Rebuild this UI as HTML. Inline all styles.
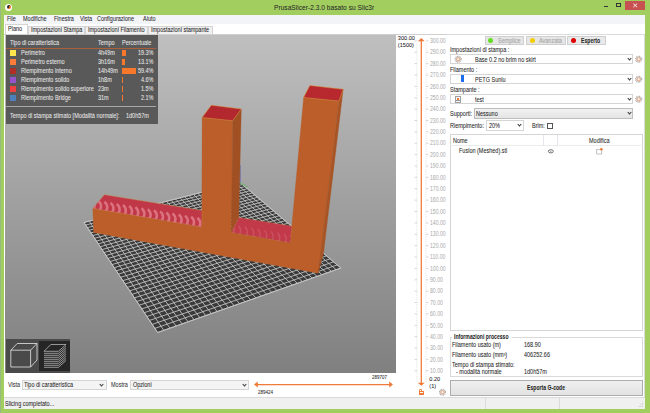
<!DOCTYPE html>
<html><head><meta charset="utf-8">
<style>
*{box-sizing:border-box}
html,body{margin:0;padding:0;width:650px;height:413px;overflow:hidden;background:#A2CE60;font-family:"Liberation Sans",sans-serif;color:#1e1e1e}
.a{position:absolute;white-space:nowrap}
.t{position:absolute;white-space:nowrap;font-size:6.4px;line-height:1;-webkit-text-stroke:0.05px currentColor;transform:scaleX(0.86);transform-origin:0 0}
.t[style*=bold]{transform:scaleX(0.8)}
.r{transform-origin:100% 0}
#title{left:274px;top:3.7px;font-size:7.2px;line-height:1;color:#222;transform:scaleX(0.925);transform-origin:0 0}
#menubar{left:4px;top:15px;width:641px;height:8.7px;background:#F3F4F7}
#tabstrip{left:4px;top:23.7px;width:641px;height:10.8px;background:#fff}
.tab{position:absolute;top:25.7px;height:8.8px;background:#F0F0F0;border:0.5px solid #d4d4d4;border-bottom:none}
#canvas{left:5px;top:34.5px;width:390.7px;height:338px;background:linear-gradient(#BFBFBF,#808080);overflow:hidden}
#main{left:4px;top:34px;width:641px;height:375px;background:#fff}
#ovl{left:6px;top:35px;width:151.6px;height:88.6px;background:#595959}
.ot{color:#e8e8e8}
.sw{position:absolute;width:6px;height:6px;left:10px}
.bar{position:absolute;left:121.5px;height:5.5px;background:#F7772B}
.vl{position:absolute;left:429.5px;font-size:6.6px;color:#a8a8a8;line-height:6.4px;white-space:nowrap;transform:scaleX(0.78);transform-origin:0 0}
.btn{position:absolute;top:35.6px;height:9.6px;background:#E6E6E6;border:0.6px solid #CFCFCF;border-radius:0.6px}
.dot{position:absolute;width:5.2px;height:5.2px;border-radius:50%;top:1.2px}
.combo{position:absolute;background:#fff;border:0.6px solid #D5D5D5}
.arrow{position:absolute;width:3px;height:3px;border-right:0.7px solid #333;border-bottom:0.7px solid #333;transform:rotate(45deg)}
.gear{position:absolute;width:6.4px;height:6.4px;border-radius:50%;border:1.1px dotted #a8a8a8;background:radial-gradient(circle,#fff 0 1px,#f2c4a4 1.1px 2.2px,#c0c0c0 2.3px 2.6px,transparent 2.7px)}
</style></head><body>
<!-- title bar -->
<div class="a" style="left:5.3px;top:3.65px;width:7px;height:7px;border-radius:50%;background:#fff"></div>
<div class="a" style="left:6.6px;top:4.9px;width:4.5px;height:4.6px;border-radius:50%;background:linear-gradient(125deg,#2a2a2a 0 48%,#EE6A1E 52%)"></div>
<div class="a" style="left:0;top:0;width:0.8px;height:413px;background:#98B884"></div>
<div class="a" id="title">PrusaSlicer-2.3.0 basato su Slic3r</div>
<div class="a" style="left:603.8px;top:6.2px;width:4.4px;height:1px;background:#333"></div>
<div class="a" style="left:616px;top:3.3px;width:5.2px;height:4px;border:0.5px solid #333;border-top-width:1.1px"></div>
<div class="a" style="left:625px;top:1px;width:20.4px;height:8.6px;background:#C75050"></div>
<svg class="a" style="left:0;top:0" width="650" height="20"><path d="M633.3 3.6L637.1 7.2M637.1 3.6L633.3 7.2" stroke="#fff" stroke-width="0.9"/></svg>

<!-- main white area -->
<div class="a" id="main"></div>
<div class="a" id="menubar"></div>
<div class="a" id="tabstrip"></div>
<div class="t" style="left:7.4px;top:16.0px">File</div>
<div class="t" style="left:22.8px;top:16.0px">Modifiche</div>
<div class="t" style="left:54px;top:16.0px">Finestra</div>
<div class="t" style="left:80px;top:16.0px">Vista</div>
<div class="t" style="left:97.3px;top:16.0px">Configurazione</div>
<div class="t" style="left:142.5px;top:16.0px">Aiuto</div>

<div class="tab" style="left:28.2px;width:56.4px"></div>
<div class="tab" style="left:84.6px;width:63.3px"></div>
<div class="tab" style="left:147.9px;width:64.8px"></div>
<div class="a" style="left:4.6px;top:23.7px;width:23.6px;height:11px;background:#fff;border:0.5px solid #d4d4d4;border-bottom:none"></div>
<div class="t" style="left:7.8px;top:25.9px">Piano</div>
<div class="t" style="left:30.5px;top:27.1px">Impostazioni Stampa</div>
<div class="t" style="left:87.6px;top:27.1px">Impostazioni Filamento</div>
<div class="t" style="left:151.1px;top:27.1px">Impostazioni stampante</div>
<div class="a" style="left:4px;top:34px;width:641px;height:0.6px;background:#d0d0d0"></div>

<!-- canvas -->
<div class="a" id="canvas"></div>
<svg class="a" style="left:0;top:0" width="650" height="413" viewBox="0 0 650 413">
  <defs>
    <clipPath id="btl"><polygon points="104.4,194.7 202.0,210.6 201.8,227.0 92.8,208.3"/></clipPath>
    <clipPath id="btm"><polygon points="238.8,217.4 291.8,226.1 290.3,242.8 231.5,232.5"/></clipPath>
    <clipPath id="cv"><rect x="5" y="34.5" width="390.7" height="338"/></clipPath>
    <radialGradient id="arcs" gradientUnits="userSpaceOnUse" cx="40" cy="250" r="9" spreadMethod="repeat">
      <stop offset="0" stop-color="#B92E3C"/>
      <stop offset="0.45" stop-color="#B92E3C"/>
      <stop offset="0.65" stop-color="#E07C8A"/>
      <stop offset="0.85" stop-color="#B92E3C"/>
      <stop offset="1" stop-color="#B92E3C"/>
    </radialGradient>
  </defs>
  <g clip-path="url(#cv)">
    <polygon points="84,222.5 240,182.5 340.8,268 157.6,332.5" fill="#3a3a3a" stroke="#d0d0d0" stroke-width="0.7"/>
    <path d="M84.00 222.50L157.60 332.50M84.00 222.50L240.00 182.50M89.14 221.18L163.81 330.31M85.71 225.05L242.41 184.54M94.23 219.88L169.96 328.15M87.44 227.64L244.84 186.61M99.30 218.58L176.05 326.00M89.19 230.25L247.31 188.70M104.32 217.29L182.09 323.88M90.96 232.91L249.80 190.81M109.31 216.01L188.08 321.77M92.76 235.59L252.32 192.95M114.27 214.74L194.01 319.68M94.58 238.32L254.87 195.11M119.19 213.48L199.88 317.61M96.43 241.07L257.45 197.30M124.07 212.23L205.71 315.56M98.30 243.87L260.06 199.51M128.92 210.98L211.48 313.53M100.19 246.70L262.70 201.76M133.74 209.75L217.20 311.51M102.12 249.58L265.37 204.02M138.52 208.52L222.88 309.52M104.06 252.49L268.08 206.32M143.27 207.30L228.50 307.54M106.04 255.44L270.82 208.64M147.99 206.09L234.07 305.58M108.04 258.43L273.59 210.99M152.67 204.89L239.59 303.63M110.07 261.47L276.40 213.37M157.32 203.70L245.07 301.70M112.13 264.54L279.24 215.78M161.94 202.51L250.50 299.79M114.22 267.66L282.12 218.22M166.53 201.34L255.88 297.90M116.34 270.83L285.03 220.69M171.09 200.17L261.22 296.02M118.48 274.04L287.98 223.20M175.61 199.01L266.51 294.16M120.66 277.30L290.97 225.73M180.11 197.86L271.76 292.31M122.88 280.60L293.99 228.30M184.58 196.71L276.96 290.48M125.12 283.95L297.06 230.90M189.01 195.57L282.12 288.66M127.40 287.36L300.16 233.53M193.42 194.44L287.23 286.86M129.71 290.81L303.30 236.19M197.79 193.32L292.31 285.07M132.05 294.32L306.49 238.90M202.14 192.21L297.34 283.30M134.43 297.87L309.72 241.63M206.46 191.10L302.33 281.55M136.85 301.49L312.99 244.41M210.75 190.00L307.27 279.80M139.30 305.16L316.30 247.22M215.01 188.91L312.18 278.08M141.80 308.88L319.66 250.07M219.24 187.82L317.05 276.36M144.33 312.66L323.06 252.96M223.45 186.74L321.88 274.66M146.90 316.51L326.51 255.88M227.63 185.67L326.66 272.98M149.51 320.41L330.01 258.85M231.78 184.61L331.41 271.30M152.16 324.38L333.56 261.86M235.90 183.55L336.13 269.65M154.86 328.40L337.15 264.91M240.00 182.50L340.80 268.00M157.60 332.50L340.80 268.00" stroke="#c8c8c8" stroke-width="0.85" fill="none"/>
    <line x1="240" y1="165" x2="240" y2="183" stroke="#4040c0" stroke-width="0.7"/>
    <line x1="240" y1="183" x2="247.5" y2="187" stroke="#40b040" stroke-width="0.7"/>
    <polygon points="92.8,208.3 201.8,227.0 202.1,117.5 232.6,120.7 231.5,232.5 290.3,242.8 303.6,97.5 338.9,101.1 318.3,273.2 93.7,232.5" fill="#BB5E2A" stroke="#BB5E2A" stroke-width="0.3"/>
    <polygon points="232.6,120.7 241.3,109.0 238.8,217.4 231.5,232.5" fill="#A05023" stroke="#A05023" stroke-width="0.3"/>
    <polygon points="338.9,101.1 343.2,89.3 323.5,253.5 318.3,273.2" fill="#A85424" stroke="#A85424" stroke-width="0.3"/>
    <polygon points="104.4,194.7 202.0,210.6 201.8,227.0 92.8,208.3" fill="#C03848" stroke="#D08A40" stroke-width="0.4"/>
    <g clip-path="url(#btl)"><path d="M92.00 199.66C95.80 202.81 95.80 207.51 92.00 210.66M98.20 200.73C102.00 203.88 102.00 208.58 98.20 211.73M104.40 201.79C108.20 204.94 108.20 209.64 104.40 212.79M110.60 202.85C114.40 206.00 114.40 210.70 110.60 213.85M116.80 203.92C120.60 207.07 120.60 211.77 116.80 214.92M123.00 204.98C126.80 208.13 126.80 212.83 123.00 215.98M129.20 206.04C133.00 209.19 133.00 213.89 129.20 217.04M135.40 207.11C139.20 210.26 139.20 214.96 135.40 218.11M141.60 208.17C145.40 211.32 145.40 216.02 141.60 219.17M147.80 209.24C151.60 212.39 151.60 217.09 147.80 220.24M154.00 210.30C157.80 213.45 157.80 218.15 154.00 221.30M160.20 211.36C164.00 214.51 164.00 219.21 160.20 222.36M166.40 212.43C170.20 215.58 170.20 220.28 166.40 223.43M172.60 213.49C176.40 216.64 176.40 221.34 172.60 224.49M178.80 214.55C182.60 217.70 182.60 222.40 178.80 225.55M185.00 215.62C188.80 218.77 188.80 223.47 185.00 226.62M191.20 216.68C195.00 219.83 195.00 224.53 191.20 227.68M197.40 217.75C201.20 220.90 201.20 225.60 197.40 228.75" fill="none" stroke="#E07C8A" stroke-width="2.5" opacity="0.85"/></g>
    <polygon points="238.8,217.4 291.8,226.1 290.3,242.8 231.5,232.5" fill="#C23A4A" stroke="#D08A40" stroke-width="0.3"/>
    <g clip-path="url(#btm)"><path d="M232.00 224.59C235.00 227.59 235.00 232.09 232.00 235.09M238.50 225.73C241.50 228.73 241.50 233.23 238.50 236.23M245.00 226.86C248.00 229.86 248.00 234.36 245.00 237.36M251.50 228.00C254.50 231.00 254.50 235.50 251.50 238.50M258.00 229.14C261.00 232.14 261.00 236.64 258.00 239.64M264.50 230.28C267.50 233.28 267.50 237.78 264.50 240.78M271.00 231.42C274.00 234.42 274.00 238.92 271.00 241.92M277.50 232.56C280.50 235.56 280.50 240.06 277.50 243.06M284.00 233.70C287.00 236.70 287.00 241.20 284.00 244.20M290.50 234.84C293.50 237.84 293.50 242.34 290.50 245.34" fill="none" stroke="#D87080" stroke-width="1.6" opacity="0.4"/></g>
    <polygon points="211.3,105.2 241.3,109.0 232.6,120.7 202.1,117.5" fill="#B3282E" stroke="#D89030" stroke-width="0.5"/>
    <polygon points="309.8,85.5 343.2,89.3 338.9,101.1 303.6,97.5" fill="#B8292F" stroke="#D89030" stroke-width="0.5"/>
  </g>
</svg>

<!-- legend overlay -->
<div class="a" id="ovl"></div>
<div class="t ot" style="left:10px;top:39.6px">Tipo di caratteristica</div>
<div class="t ot" style="left:97.7px;top:39.6px">Tempo</div>
<div class="t ot" style="left:121.5px;top:39.6px">Percentuale</div>
<div class="a" style="left:6px;top:47.8px;width:149.5px;height:0.9px;background:#A8613A"></div>
<div class="sw" style="top:50px;background:#FFE64D"></div>
<div class="sw" style="top:59px;background:#FF7D38"></div>
<div class="sw" style="top:68px;background:#B03029"></div>
<div class="sw" style="top:77px;background:#9654CC"></div>
<div class="sw" style="top:86px;background:#F04040"></div>
<div class="sw" style="top:95px;background:#4D80BA"></div>
<div class="t ot" style="left:20.8px;top:50.4px">Perimetro</div>
<div class="t ot" style="left:20.8px;top:59.4px">Perimetro esterno</div>
<div class="t ot" style="left:20.8px;top:68.4px">Riempimento interno</div>
<div class="t ot" style="left:20.8px;top:77.4px">Riempimento solido</div>
<div class="t ot" style="left:20.8px;top:86.4px">Riempimento solido superiore</div>
<div class="t ot" style="left:20.8px;top:95.4px">Riempimento Bridge</div>
<div class="t ot" style="left:97.7px;top:50.4px">4h49m</div>
<div class="t ot" style="left:97.7px;top:59.4px">3h16m</div>
<div class="t ot" style="left:97.7px;top:68.4px">14h49m</div>
<div class="t ot" style="left:97.7px;top:77.4px">1h8m</div>
<div class="t ot" style="left:97.7px;top:86.4px">23m</div>
<div class="t ot" style="left:97.7px;top:95.4px">31m</div>
<div class="bar" style="top:50.3px;width:4.6px"></div>
<div class="bar" style="top:59.3px;width:3.4px"></div>
<div class="bar" style="top:68.3px;width:14.3px"></div>
<div class="bar" style="top:77.3px;width:1px"></div>
<div class="bar" style="top:86.3px;width:0.6px"></div>
<div class="bar" style="top:95.3px;width:0.6px"></div>
<div class="t ot r" style="left:130px;width:23.5px;text-align:right;top:50.4px">19.3%</div>
<div class="t ot r" style="left:130px;width:23.5px;text-align:right;top:59.4px">13.1%</div>
<div class="t ot r" style="left:130px;width:23.5px;text-align:right;top:68.4px">59.4%</div>
<div class="t ot r" style="left:130px;width:23.5px;text-align:right;top:77.4px">4.6%</div>
<div class="t ot r" style="left:130px;width:23.5px;text-align:right;top:86.4px">1.5%</div>
<div class="t ot r" style="left:130px;width:23.5px;text-align:right;top:95.4px">2.1%</div>
<div class="a" style="left:6px;top:106.1px;width:149.8px;height:0.8px;background:#a8a8a8"></div>
<div class="t ot" style="left:10px;top:112.6px">Tempo di stampa stimato [Modalità normale]:</div>
<div class="t ot" style="left:126px;top:112.6px">1d0h57m</div>

<!-- view toolbar -->
<div class="a" style="left:6px;top:338.8px;width:64.3px;height:34px;background:#4a4a4a"></div>
<div class="a" style="left:39px;top:341px;width:30.5px;height:29.7px;background:#262626"></div>
<svg class="a" style="left:0;top:0" width="650" height="413" viewBox="0 0 650 413">
  <g fill="none" stroke="#e6e6e6" stroke-width="0.8">
    <path d="M10.8 350.2 L17.2 343.5 L37 343.5 L37 360 L30.6 367 L10.8 367 Z M10.8 350.2 L30.6 350.2 L37 343.5 M30.6 350.2 L30.6 367"/>
  </g>
  <g fill="none" stroke="#e0e0e0" stroke-width="0.6">
    <path d="M44 351.3 L50.8 344.5 L66 344.5 L58.4 351.3 Z"/>
    <path d="M44 353.3H58.4L66 346.5 M44 355.3H58.4L66 348.5 M44 357.3H58.4L66 350.5 M44 359.3H58.4L66 352.5 M44 361.3H58.4L66 354.5 M44 363.3H58.4L66 356.5 M44 365.3H58.4L66 358.5 M44 367.3H58.4L66 360.5"/>
  </g>
</svg>

<!-- bottom toolbar -->
<div class="t" style="left:8px;top:382px;color:#333">Vista</div>
<div class="combo" style="left:22px;top:379.5px;width:84.6px;height:10.8px;background:#F4F4F4"></div>
<div class="t" style="left:24.2px;top:382px">Tipo di caratteristica</div>
<div class="arrow" style="left:100.2px;top:382.6px"></div>
<div class="t" style="left:111px;top:382px;color:#333">Mostra</div>
<div class="combo" style="left:130.3px;top:379.5px;width:118.7px;height:10.8px;background:#F4F4F4"></div>
<div class="t" style="left:132.5px;top:382px">Opzioni</div>
<div class="arrow" style="left:242.6px;top:382.6px"></div>
<svg class="a" style="left:0;top:0" width="650" height="413" viewBox="0 0 650 413">
  <line x1="256" y1="384.6" x2="391" y2="384.6" stroke="#F07A3A" stroke-width="1.1"/>
  <path d="M254 384.6 L257.8 381.6 L257.8 387.6 Z M393 384.6 L389.2 381.6 L389.2 387.6 Z" fill="#F07A3A"/>
  <!-- vertical slider -->
  <line x1="416.8" y1="43" x2="416.8" y2="382" stroke="#c0c0c0" stroke-width="0.5" stroke-dasharray="0.8 1"/>
  <line x1="426" y1="43" x2="426" y2="382" stroke="#c0c0c0" stroke-width="0.5" stroke-dasharray="0.8 1"/>
  <line x1="414.5" y1="370.80" x2="417" y2="370.80" stroke="#b0b0b0" stroke-width="0.5"/>
<line x1="426" y1="370.80" x2="428.5" y2="370.80" stroke="#b0b0b0" stroke-width="0.5"/>
<line x1="414.5" y1="359.42" x2="417" y2="359.42" stroke="#b0b0b0" stroke-width="0.5"/>
<line x1="426" y1="359.42" x2="428.5" y2="359.42" stroke="#b0b0b0" stroke-width="0.5"/>
<line x1="414.5" y1="348.05" x2="417" y2="348.05" stroke="#b0b0b0" stroke-width="0.5"/>
<line x1="426" y1="348.05" x2="428.5" y2="348.05" stroke="#b0b0b0" stroke-width="0.5"/>
<line x1="414.5" y1="336.67" x2="417" y2="336.67" stroke="#b0b0b0" stroke-width="0.5"/>
<line x1="426" y1="336.67" x2="428.5" y2="336.67" stroke="#b0b0b0" stroke-width="0.5"/>
<line x1="414.5" y1="325.30" x2="417" y2="325.30" stroke="#b0b0b0" stroke-width="0.5"/>
<line x1="426" y1="325.30" x2="428.5" y2="325.30" stroke="#b0b0b0" stroke-width="0.5"/>
<line x1="414.5" y1="313.92" x2="417" y2="313.92" stroke="#b0b0b0" stroke-width="0.5"/>
<line x1="426" y1="313.92" x2="428.5" y2="313.92" stroke="#b0b0b0" stroke-width="0.5"/>
<line x1="414.5" y1="302.54" x2="417" y2="302.54" stroke="#b0b0b0" stroke-width="0.5"/>
<line x1="426" y1="302.54" x2="428.5" y2="302.54" stroke="#b0b0b0" stroke-width="0.5"/>
<line x1="414.5" y1="291.17" x2="417" y2="291.17" stroke="#b0b0b0" stroke-width="0.5"/>
<line x1="426" y1="291.17" x2="428.5" y2="291.17" stroke="#b0b0b0" stroke-width="0.5"/>
<line x1="414.5" y1="279.79" x2="417" y2="279.79" stroke="#b0b0b0" stroke-width="0.5"/>
<line x1="426" y1="279.79" x2="428.5" y2="279.79" stroke="#b0b0b0" stroke-width="0.5"/>
<line x1="414.5" y1="268.42" x2="417" y2="268.42" stroke="#b0b0b0" stroke-width="0.5"/>
<line x1="426" y1="268.42" x2="428.5" y2="268.42" stroke="#b0b0b0" stroke-width="0.5"/>
<line x1="414.5" y1="257.04" x2="417" y2="257.04" stroke="#b0b0b0" stroke-width="0.5"/>
<line x1="426" y1="257.04" x2="428.5" y2="257.04" stroke="#b0b0b0" stroke-width="0.5"/>
<line x1="414.5" y1="245.66" x2="417" y2="245.66" stroke="#b0b0b0" stroke-width="0.5"/>
<line x1="426" y1="245.66" x2="428.5" y2="245.66" stroke="#b0b0b0" stroke-width="0.5"/>
<line x1="414.5" y1="234.29" x2="417" y2="234.29" stroke="#b0b0b0" stroke-width="0.5"/>
<line x1="426" y1="234.29" x2="428.5" y2="234.29" stroke="#b0b0b0" stroke-width="0.5"/>
<line x1="414.5" y1="222.91" x2="417" y2="222.91" stroke="#b0b0b0" stroke-width="0.5"/>
<line x1="426" y1="222.91" x2="428.5" y2="222.91" stroke="#b0b0b0" stroke-width="0.5"/>
<line x1="414.5" y1="211.54" x2="417" y2="211.54" stroke="#b0b0b0" stroke-width="0.5"/>
<line x1="426" y1="211.54" x2="428.5" y2="211.54" stroke="#b0b0b0" stroke-width="0.5"/>
<line x1="414.5" y1="200.16" x2="417" y2="200.16" stroke="#b0b0b0" stroke-width="0.5"/>
<line x1="426" y1="200.16" x2="428.5" y2="200.16" stroke="#b0b0b0" stroke-width="0.5"/>
<line x1="414.5" y1="188.78" x2="417" y2="188.78" stroke="#b0b0b0" stroke-width="0.5"/>
<line x1="426" y1="188.78" x2="428.5" y2="188.78" stroke="#b0b0b0" stroke-width="0.5"/>
<line x1="414.5" y1="177.41" x2="417" y2="177.41" stroke="#b0b0b0" stroke-width="0.5"/>
<line x1="426" y1="177.41" x2="428.5" y2="177.41" stroke="#b0b0b0" stroke-width="0.5"/>
<line x1="414.5" y1="166.03" x2="417" y2="166.03" stroke="#b0b0b0" stroke-width="0.5"/>
<line x1="426" y1="166.03" x2="428.5" y2="166.03" stroke="#b0b0b0" stroke-width="0.5"/>
<line x1="414.5" y1="154.66" x2="417" y2="154.66" stroke="#b0b0b0" stroke-width="0.5"/>
<line x1="426" y1="154.66" x2="428.5" y2="154.66" stroke="#b0b0b0" stroke-width="0.5"/>
<line x1="414.5" y1="143.28" x2="417" y2="143.28" stroke="#b0b0b0" stroke-width="0.5"/>
<line x1="426" y1="143.28" x2="428.5" y2="143.28" stroke="#b0b0b0" stroke-width="0.5"/>
<line x1="414.5" y1="131.90" x2="417" y2="131.90" stroke="#b0b0b0" stroke-width="0.5"/>
<line x1="426" y1="131.90" x2="428.5" y2="131.90" stroke="#b0b0b0" stroke-width="0.5"/>
<line x1="414.5" y1="120.53" x2="417" y2="120.53" stroke="#b0b0b0" stroke-width="0.5"/>
<line x1="426" y1="120.53" x2="428.5" y2="120.53" stroke="#b0b0b0" stroke-width="0.5"/>
<line x1="414.5" y1="109.15" x2="417" y2="109.15" stroke="#b0b0b0" stroke-width="0.5"/>
<line x1="426" y1="109.15" x2="428.5" y2="109.15" stroke="#b0b0b0" stroke-width="0.5"/>
<line x1="414.5" y1="97.78" x2="417" y2="97.78" stroke="#b0b0b0" stroke-width="0.5"/>
<line x1="426" y1="97.78" x2="428.5" y2="97.78" stroke="#b0b0b0" stroke-width="0.5"/>
<line x1="414.5" y1="86.40" x2="417" y2="86.40" stroke="#b0b0b0" stroke-width="0.5"/>
<line x1="426" y1="86.40" x2="428.5" y2="86.40" stroke="#b0b0b0" stroke-width="0.5"/>
<line x1="414.5" y1="75.02" x2="417" y2="75.02" stroke="#b0b0b0" stroke-width="0.5"/>
<line x1="426" y1="75.02" x2="428.5" y2="75.02" stroke="#b0b0b0" stroke-width="0.5"/>
<line x1="414.5" y1="63.65" x2="417" y2="63.65" stroke="#b0b0b0" stroke-width="0.5"/>
<line x1="426" y1="63.65" x2="428.5" y2="63.65" stroke="#b0b0b0" stroke-width="0.5"/>
<line x1="414.5" y1="52.27" x2="417" y2="52.27" stroke="#b0b0b0" stroke-width="0.5"/>
<line x1="426" y1="52.27" x2="428.5" y2="52.27" stroke="#b0b0b0" stroke-width="0.5"/>
<line x1="414.5" y1="40.90" x2="417" y2="40.90" stroke="#b0b0b0" stroke-width="0.5"/>
<line x1="426" y1="40.90" x2="428.5" y2="40.90" stroke="#b0b0b0" stroke-width="0.5"/>
  <line x1="421.3" y1="40" x2="421.3" y2="384" stroke="#F07A3A" stroke-width="1.3"/>
  <path d="M421.3 38 L417.8 41.3 L424.8 41.3 Z" fill="#F07A3A"/>
  <path d="M421.3 385.8 L417.8 382.8 L424.8 382.8 Z" fill="#F07A3A"/>
</svg>
<div class="t" style="left:372px;top:375px;font-size:5.2px">289707</div>
<div class="t" style="left:258px;top:390.2px;font-size:5.2px">289424</div>

<!-- vertical slider panel -->
<div class="t" style="left:397.8px;top:36px;font-size:5.6px;transform:none">300.00</div>
<div class="t" style="left:397.8px;top:43px;font-size:5.6px;transform:none">(1500)</div>
<div class="vl" style="top:38.10px">300.00</div>
<div class="vl" style="top:49.47px">290.00</div>
<div class="vl" style="top:60.85px">280.00</div>
<div class="vl" style="top:72.22px">270.00</div>
<div class="vl" style="top:83.60px">260.00</div>
<div class="vl" style="top:94.98px">250.00</div>
<div class="vl" style="top:106.35px">240.00</div>
<div class="vl" style="top:117.73px">230.00</div>
<div class="vl" style="top:129.10px">220.00</div>
<div class="vl" style="top:140.48px">210.00</div>
<div class="vl" style="top:151.86px">200.00</div>
<div class="vl" style="top:163.23px">190.00</div>
<div class="vl" style="top:174.61px">180.00</div>
<div class="vl" style="top:185.98px">170.00</div>
<div class="vl" style="top:197.36px">160.00</div>
<div class="vl" style="top:208.74px">150.00</div>
<div class="vl" style="top:220.11px">140.00</div>
<div class="vl" style="top:231.49px">130.00</div>
<div class="vl" style="top:242.86px">120.00</div>
<div class="vl" style="top:254.24px">110.00</div>
<div class="vl" style="top:265.62px">100.00</div>
<div class="vl" style="top:276.99px">90.00</div>
<div class="vl" style="top:288.37px">80.00</div>
<div class="vl" style="top:299.74px">70.00</div>
<div class="vl" style="top:311.12px">60.00</div>
<div class="vl" style="top:322.50px">50.00</div>
<div class="vl" style="top:333.87px">40.00</div>
<div class="vl" style="top:345.25px">30.00</div>
<div class="vl" style="top:356.62px">20.00</div>
<div class="vl" style="top:368.00px">10.00</div>
<div class="t" style="left:429.3px;top:376.8px;font-size:5.6px;transform:none">0.20</div>
<div class="t" style="left:429.3px;top:384.2px;font-size:5.6px;transform:none">(1)</div>
<!-- lock -->
<div class="a" style="left:418.6px;top:391px;width:5.4px;height:3.8px;background:#F07A3A"></div>
<div class="a" style="left:418.6px;top:388.6px;width:3.6px;height:3.4px;border:1px solid #F07A3A;border-bottom:none;border-radius:1.8px 1.8px 0 0"></div>
<div class="a" style="left:419.8px;top:392.4px;width:3.2px;height:1px;background:#fff"></div>

<!-- sidebar -->
<div class="a" style="left:447px;top:34.3px;width:198px;height:0.6px;background:#dcdcdc"></div>
<div class="a" style="left:644.2px;top:34px;width:0.7px;height:375px;background:#dcdcdc"></div>
<div class="btn" style="left:485px;width:39.4px"><div class="dot" style="left:2.2px;background:#66DD22"></div></div>
<div class="btn" style="left:526.4px;width:39.2px"><div class="dot" style="left:2.4px;background:#F5CC00"></div></div>
<div class="btn" style="left:567.4px;width:38.2px;background:#E9E9E9"><div class="dot" style="left:2.8px;background:#DD0000"></div></div>
<div class="t" style="left:498px;top:38.4px;color:#a0a0a0">Semplice</div>
<div class="t" style="left:539.4px;top:38.4px;color:#a0a0a0">Avanzata</div>
<div class="t" style="left:581px;top:38.4px;font-weight:bold">Esperto</div>

<div class="t" style="left:449.5px;top:46.6px">Impostazioni di stampa :</div>
<div class="combo" style="left:449.5px;top:53.8px;width:183.5px;height:10.6px"></div>
<div class="t" style="left:475px;top:57.2px">Base 0.2 no brim no skirt</div>
<div class="arrow" style="left:627.5px;top:56.6px"></div>

<div class="t" style="left:449.5px;top:66.6px">Filamento :</div>
<div class="combo" style="left:449.5px;top:73.8px;width:183.5px;height:10.6px"></div>
<div class="a" style="left:460.5px;top:75.4px;width:3px;height:7px;background:#1E6EF0"></div>
<div class="t" style="left:475px;top:77.2px">PETG Sunlu</div>
<div class="arrow" style="left:627.5px;top:76.6px"></div>

<div class="t" style="left:449.5px;top:86.6px">Stampante :</div>
<div class="combo" style="left:449.5px;top:93.8px;width:183.5px;height:10.6px"></div>
<div class="a" style="left:455.4px;top:96px;width:6px;height:6.6px;background:#f4f4f4;border:0.5px solid #a0a0a0"><div style="position:absolute;left:0.5px;top:1.2px;width:2px;height:1.5px;background:#F07A3A"></div><div style="position:absolute;left:0;top:3.4px;width:5px;height:0.4px;background:#999"></div></div>
<div class="t" style="left:474.6px;top:97.2px">test</div>
<div class="arrow" style="left:627.5px;top:96.6px"></div>

<div class="t" style="left:450px;top:110.6px">Supporti:</div>
<div class="combo" style="left:473.5px;top:108px;width:159px;height:10.6px;background:linear-gradient(#F2F2F2,#E4E4E4);border-color:#BDBDBD"></div>
<div class="t" style="left:475.7px;top:111.4px">Nessuno</div>
<div class="arrow" style="left:627.5px;top:110.8px"></div>

<div class="t" style="left:450px;top:122.6px">Riempimento:</div>
<div class="combo" style="left:486px;top:120.3px;width:37.8px;height:10.5px"></div>
<div class="t" style="left:489px;top:123.4px">20%</div>
<div class="arrow" style="left:518px;top:122.8px"></div>
<div class="t" style="left:532.4px;top:123px">Brim:</div>
<div class="a" style="left:547.4px;top:122.6px;width:6px;height:6px;border:0.6px solid #555;background:#fff"></div>

<!-- object list -->
<div class="a" style="left:449.5px;top:134.3px;width:193.6px;height:196.3px;border:0.6px solid #D5D5D5;background:#fff"></div>
<div class="a" style="left:450px;top:145.4px;width:193px;height:0.5px;background:#ececec"></div>
<div class="a" style="left:543.2px;top:134.6px;width:0.5px;height:11px;background:#e4e8ee"></div>
<div class="a" style="left:557px;top:134.6px;width:0.5px;height:11px;background:#e4e8ee"></div>
<div class="t" style="left:453px;top:137.8px">Nome</div>
<div class="t" style="left:589px;top:137.6px">Modifica</div>
<div class="t" style="left:459.2px;top:148px">Fusion (Meshed).stl</div>
<svg class="a" style="left:0;top:0" width="650" height="413" viewBox="0 0 650 413">
  <ellipse cx="550.8" cy="151.3" rx="2.5" ry="1.6" fill="none" stroke="#606060" stroke-width="0.9"/>
  <circle cx="550.8" cy="151.3" r="0.6" fill="#888"/>
  <rect x="596.8" y="149.4" width="5" height="4.6" fill="#fff" stroke="#888" stroke-width="0.5"/>
  <circle cx="601.4" cy="149.2" r="1.3" fill="#F07A3A"/>
</svg>

<!-- info group -->
<div class="a" style="left:449.5px;top:336.6px;width:193.6px;height:40px;border:0.6px solid #DADADA"></div>
<div class="a" style="left:452px;top:334px;width:60px;height:5px;background:#fff"></div>
<div class="t" style="left:453.8px;top:334px;font-weight:bold">Informazioni processo</div>
<div class="t" style="left:452px;top:342.2px">Filamento usato (m)</div>
<div class="t" style="left:523.8px;top:342.2px">168.90</div>
<div class="t" style="left:452px;top:351.8px">Filamento usato (mm<sup style="font-size:3.5px;vertical-align:1.5px">3</sup>)</div>
<div class="t" style="left:523.8px;top:351.8px">406252.66</div>
<div class="t" style="left:452px;top:361.8px">Tempo di stampa stimato:</div>
<div class="t" style="left:456px;top:368.8px">- modalità normale</div>
<div class="t" style="left:523.8px;top:368.8px">1d0h57m</div>

<div class="a" style="left:449.7px;top:380.3px;width:193.5px;height:15.5px;background:linear-gradient(#F0F0F0,#E2E2E2);border:0.6px solid #ADADAD"></div>
<div class="t" style="left:526.5px;top:385.4px;font-weight:bold">Esporta G-code</div>

<!-- status bar -->
<div class="a" style="left:4px;top:396.8px;width:641px;height:12.4px;background:#F0F0F0;border-top:0.6px solid #dadada"></div>
<div class="a" style="left:484.5px;top:397.5px;width:0.6px;height:11px;background:#dadada"></div>
<div class="a" style="left:559.4px;top:397.5px;width:0.6px;height:11px;background:#dadada"></div>
<div class="t" style="left:4.7px;top:401.4px">Slicing completato...</div>
<div class="a" style="left:4px;top:34.5px;width:1px;height:338px;background:#fff"></div>
<svg class="a" style="left:0;top:0" width="650" height="413" viewBox="0 0 650 413">
<defs><g id="gear"><circle r="3" fill="none" stroke="#a0a0a0" stroke-width="1.1" stroke-dasharray="0.9 0.67"/><circle r="2.2" fill="#f0b494" stroke="#b0b0b0" stroke-width="0.4"/><circle r="0.9" fill="#fff"/></g></defs>
<use href="#gear" x="442.50" y="392.20"/><use href="#gear" x="458.20" y="59.20"/><use href="#gear" x="638.70" y="59.20"/><use href="#gear" x="638.70" y="79.20"/><use href="#gear" x="638.70" y="99.20"/>
</svg>
<svg class="a" style="left:0;top:0" width="650" height="413" viewBox="0 0 650 413"><g fill="#b8b8b8"><rect x="642" y="406" width="0.8" height="0.8"/><rect x="640.4" y="406" width="0.8" height="0.8"/><rect x="642" y="404.4" width="0.8" height="0.8"/><rect x="638.8" y="406" width="0.8" height="0.8"/><rect x="640.4" y="404.4" width="0.8" height="0.8"/><rect x="642" y="402.8" width="0.8" height="0.8"/></g></svg>
</body></html>
